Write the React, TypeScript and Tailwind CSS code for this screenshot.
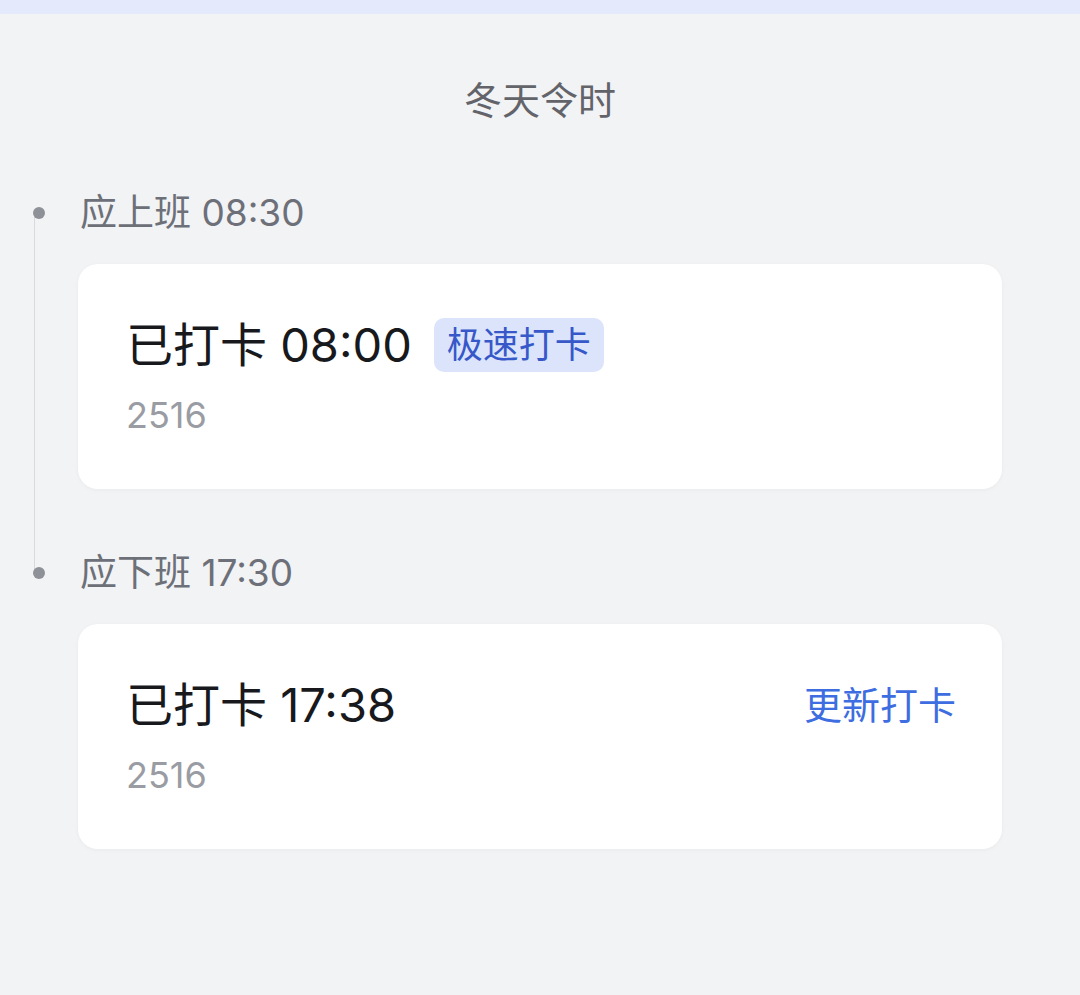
import React from "react";

const font = { fontFamily: 'Inter, "Noto Sans CJK SC", "Noto Sans", sans-serif' };

function Card({ time, right }: { time: string; right: "badge" | "link" }) {
  return (
    <div className="ml-[78px] w-[924px] rounded-[20px] bg-white shadow-[0_1px_4px_rgba(0,0,0,0.04)] pl-[48px] pr-[46px] pt-[53px] pb-[52px]">
      <div className="flex h-[56px] items-center justify-between">
        <div className="flex items-center">
          <span className="text-[47px] leading-[56px] text-[#18191c]">已打卡 {time}</span>
          {right === "badge" && (
            <span className="ml-[22px] rounded-[10px] bg-[#dbe4fb] px-[13px] text-[36px] leading-[54px] text-[#3658c9]">
              极速打卡
            </span>
          )}
        </div>
        {right === "link" && (
          <span className="text-[38px] leading-[56px] text-[#3d6de0]">更新打卡</span>
        )}
      </div>
      <div className="mt-[20px] text-[36px] leading-[44px] text-[#9a9ca3]">2516</div>
    </div>
  );
}

function Label({ text }: { text: string }) {
  return (
    <div className="relative flex h-[48px] items-center pl-[80px]">
      <span className="absolute left-[33px] top-[18px] h-[12px] w-[12px] rounded-full bg-[#8f9199]" />
      <span className="text-[37px] leading-[48px] text-[#6d7078]">{text}</span>
    </div>
  );
}

export default function App() {
  return (
    <div className="min-h-[995px] w-[1080px] bg-[#f2f3f5]" style={font}>
      <div className="h-[14px] bg-[#e4e9fb]" />
      <div className="pt-[61px] text-center text-[38px] leading-[50px] text-[#626469]">冬天令时</div>
      <div className="relative mt-[64px]">
        <span className="absolute left-[34px] top-[24px] h-[360px] w-px bg-[#d9dadd]" />
        <Label text="应上班 08:30" />
        <div className="mt-[27px]">
          <Card time="08:00" right="badge" />
        </div>
        <div className="mt-[60px]">
          <Label text="应下班 17:30" />
        </div>
        <div className="mt-[27px]">
          <Card time="17:38" right="link" />
        </div>
      </div>
    </div>
  );
}
